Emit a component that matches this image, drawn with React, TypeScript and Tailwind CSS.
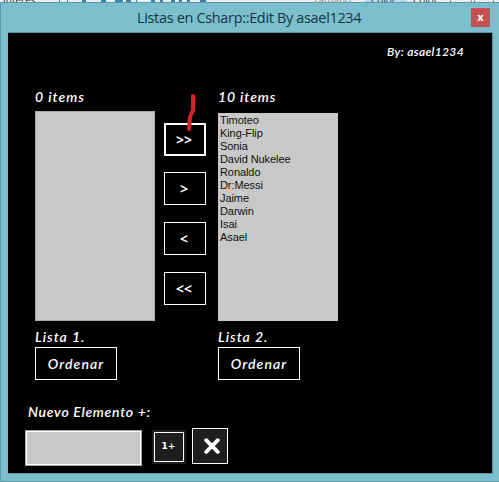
import React from "react";

const names = ["Timoteo", "King-Flip", "Sonia", "David Nukelee", "Ronaldo", "Dr:Messi", "Jaime", "Darwin", "Isai", "Asael"];

function Script({ children, className = "text-[14px] tracking-[0.8px]" }: { children: React.ReactNode; className?: string }) {
  return (
    <span className={`block whitespace-nowrap font-['Lato','Open_Sans',sans-serif] leading-[16px] font-semibold italic text-white ${className}`}>
      {children}
    </span>
  );
}

function Move({ label, className }: { label: string; className: string }) {
  return (
    <button className={`flex h-[33px] w-[42px] items-center justify-center border-white pr-[2px] font-['Noto_Sans',sans-serif] text-[14px] leading-none font-semibold text-white ${className}`}>
      {label}
    </button>
  );
}

function Sort() {
  return (
    <button className="mt-[2px] flex h-[33px] w-[82px] items-center justify-center border border-white">
      <Script className="text-[14px] tracking-[1.1px]">Ordenar</Script>
    </button>
  );
}

function Toolbar() {
  return (
    <div className="flex h-[2px] overflow-hidden bg-[#e8eef2] font-['Open_Sans',sans-serif] text-[10px] leading-[1px] text-[#333]">
      <span className="ml-[3px] w-[50px]">Interes</span>
      <svg className="w-[260px]" width="260" height="2" stroke="#3d7fa5" strokeWidth="2">
        <path d="M6 1h1M14 1h1M29 1h4M48 1h5M62 1h8M73 1h5M83 1h1M98 1h4M107 1h3M118 1h4M126 1h3M134 1h3M147 1h6" />
      </svg>
      <span className="w-[52px] text-[#888]">Tamaño</span>
      <span className="w-[42px] bg-[#bcd8ef] pl-[6px]">Color</span>
      <span className="ml-[6px] w-[37px]">Color</span>
      <span className="w-[22px] border-x border-[#7d98a5]" />
      <span className="ml-[2px] w-[20px] border-x border-[#7d98a5]" />
    </div>
  );
}

export default function App() {
  return (
    <div className="flex h-[482px] w-[499px] flex-col overflow-hidden bg-[#7bbfce]">
      <Toolbar />
      <div className="flex flex-1 flex-col border-t border-b border-l border-[#5c9aaa]">
        <header className="flex h-[29px] items-center">
          <h1 className="ml-[136px] w-[334px] whitespace-nowrap font-['Open_Sans',sans-serif] text-[14.5px] leading-5 tracking-[-0.34px] text-[#17363e]">
            Listas en Csharp::Edit By asael1234
          </h1>
          <button className="flex h-[19px] w-[19px] items-center justify-center bg-[#c75050] pb-[2px] font-['Open_Sans',sans-serif] text-[11px] leading-none font-bold text-white">x</button>
        </header>
        <main className="relative ml-[7px] h-[442px] w-[485px] border-t border-r border-b border-[#5e909b] bg-black">
          <div className="flex h-[56px] justify-end pt-[11px] pr-[18px]">
            <Script className="w-[87px] text-[12px] tracking-[0.35px]">By: asael1234</Script>
          </div>
          <div className="flex pl-[27px]">
            <section className="w-[129px]">
              <Script className="text-[14px] tracking-[1px]">0 items</Script>
              <div className="mt-[6px] h-[210px] w-[120px] border border-[#a9a9a9] bg-[#c8c8c8]" />
              <Script className="mt-[8px] text-[14px] tracking-[1px]">Lista 1.</Script>
              <Sort />
            </section>
            <div className="flex w-[54px] flex-col pt-[34px]">
              <Move label=">>" className="border-2" />
              <Move label=">" className="mt-4 border" />
              <Move label="<" className="mt-[17px] border" />
              <Move label="<<" className="mt-[17px] border" />
            </div>
            <section>
              <Script className="text-[14px] tracking-[0.9px]">10 items</Script>
              <ul className="mt-[8px] h-[208px] w-[120px] bg-[#c8c8c8] pt-px pl-[2px] font-['Liberation_Sans',Arial,sans-serif] text-[11px] leading-[13px] tracking-[-0.08px] text-[#111]">
                {names.map((n) => <li key={n}>{n}</li>)}
              </ul>
              <Script className="mt-[8px] text-[14px] tracking-[1px]">Lista 2.</Script>
              <Sort />
            </section>
          </div>
          <Script className="mt-[24px] ml-[20px] text-[14px] tracking-[0.7px]">Nuevo Elemento +:</Script>
          <div className="mt-[8px] flex items-start pl-[17px]">
            <input className="mt-[2px] h-[36px] w-[117px] border border-[#a9aaa5] bg-[#c8c8c8] ring-1 ring-white ring-inset outline-none" />
            <div className="mt-[2px] ml-[10px] bg-[#1e1e1e] p-[2px]">
              <button className="flex h-[30px] w-[30px] items-center justify-center border border-white pr-px font-['DejaVu_Sans',sans-serif] text-[9px] font-bold text-white">1+</button>
            </div>
            <button className="ml-[6px] flex h-[36px] w-[36px] items-center justify-center border border-white bg-[#1e1e1e] pb-px pl-[3px]">
              <svg width="16" height="16" viewBox="0 0 16 16" stroke="white" strokeWidth="3.8" strokeLinecap="round"><path d="M2.2 2.2 13.8 13.8M13.8 2.2 2.2 13.8" /></svg>
            </button>
          </div>
          <svg className="absolute top-[60px] left-[174px]" width="16" height="40" fill="none" stroke="#dc202a" strokeWidth="4" strokeLinecap="round" strokeLinejoin="round">
            <path d="M11 3V17L8 24L7 36" />
          </svg>
        </main>
      </div>
    </div>
  );
}
